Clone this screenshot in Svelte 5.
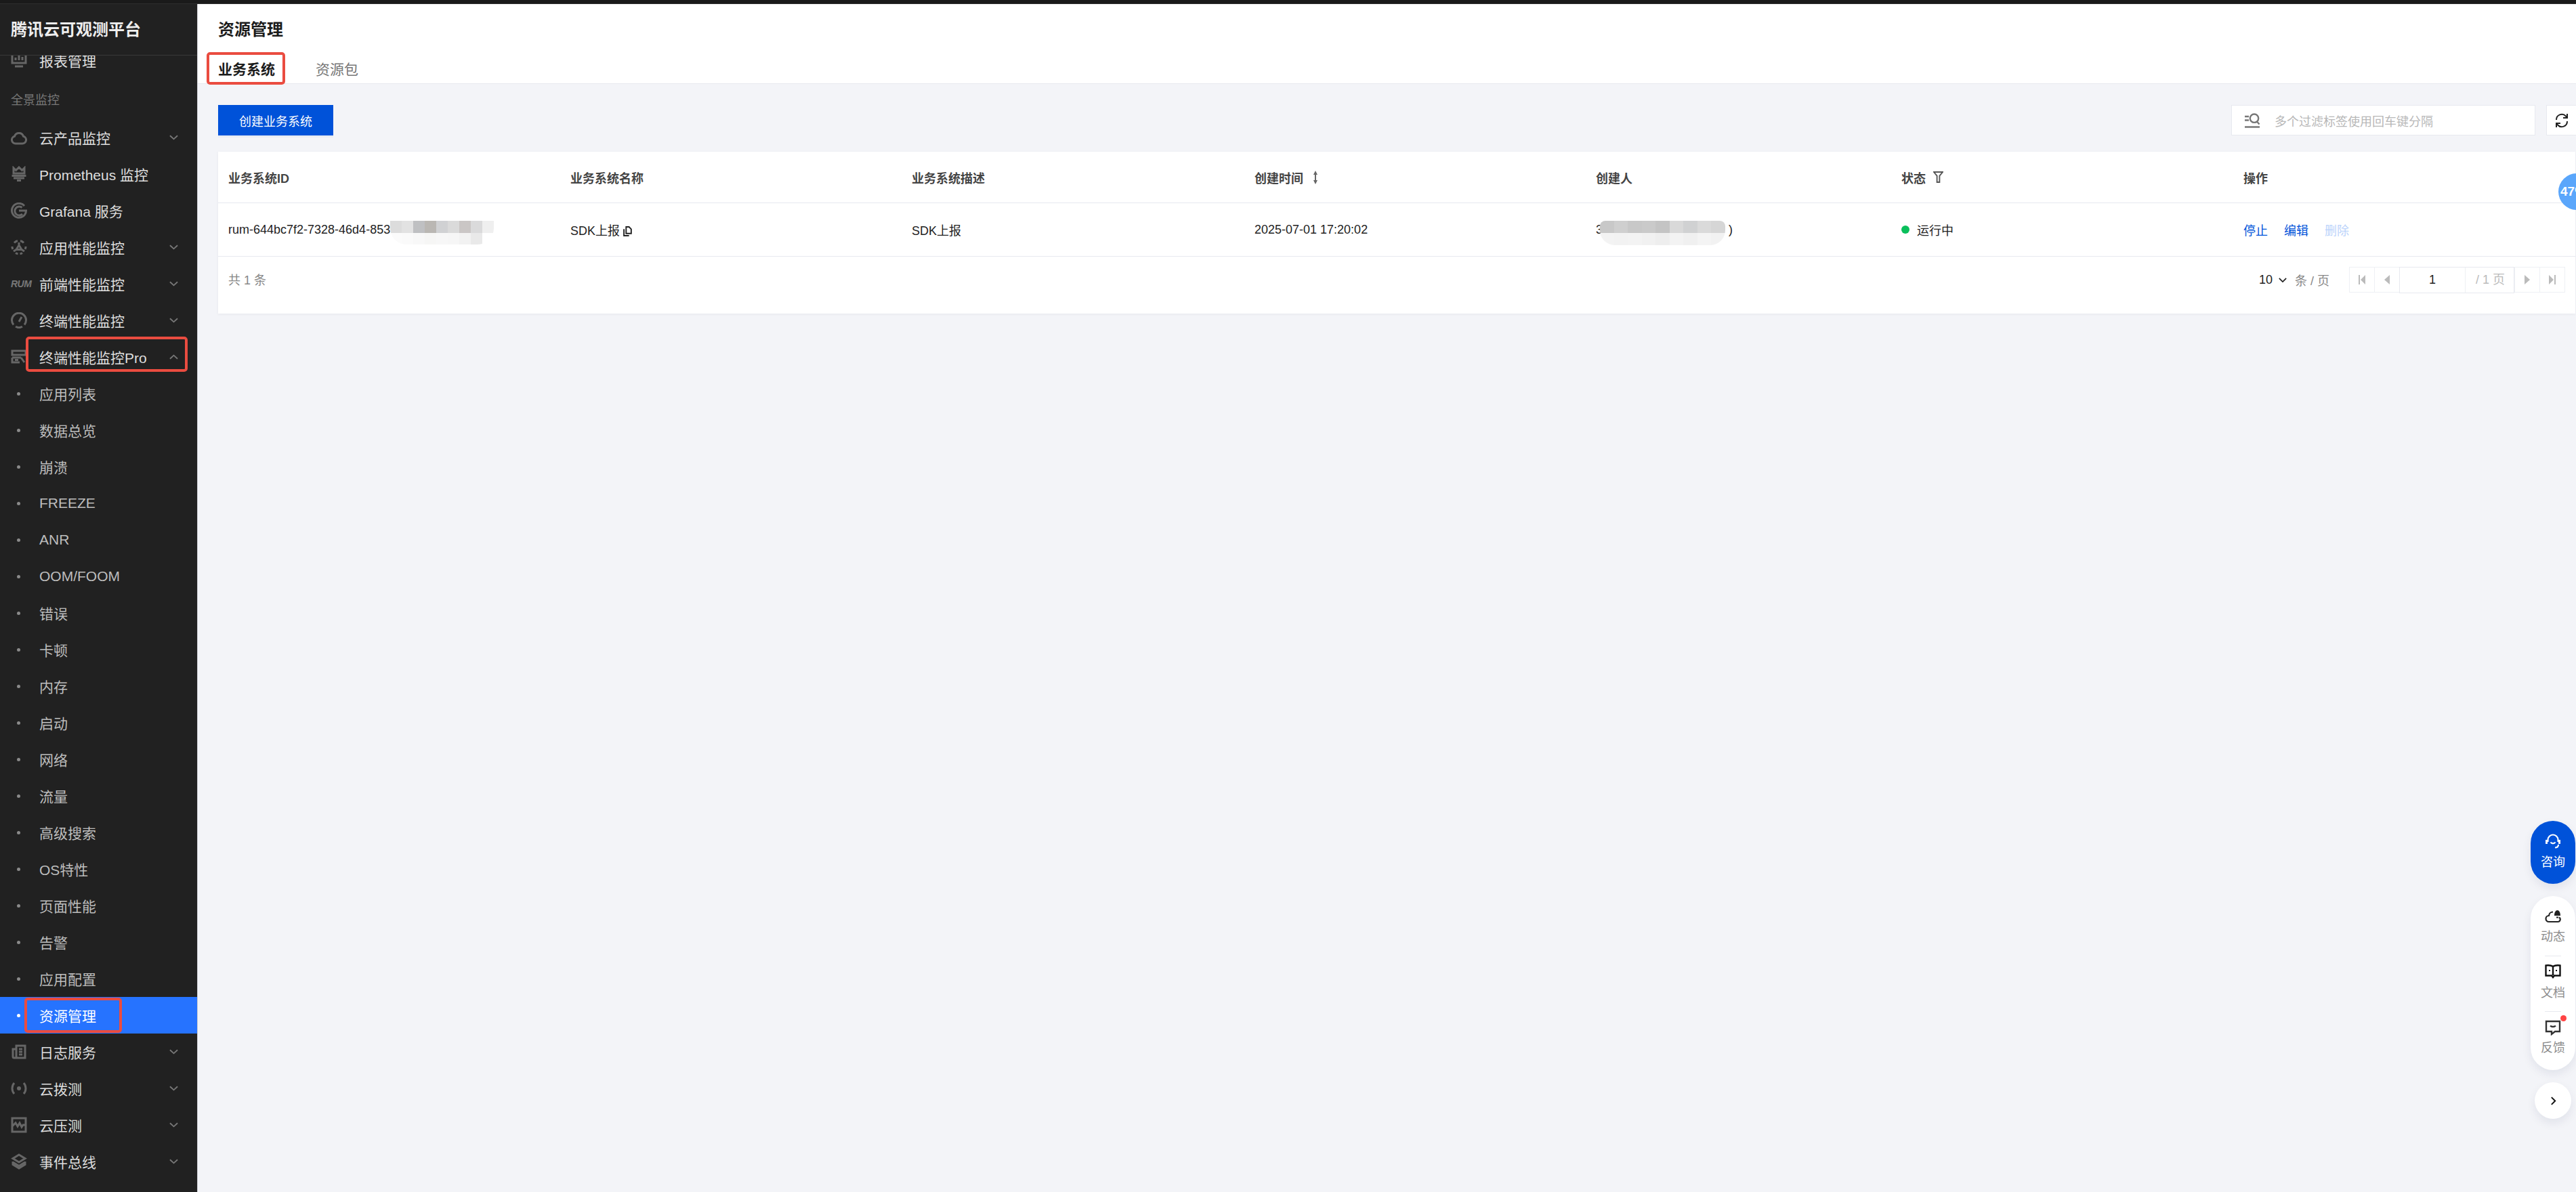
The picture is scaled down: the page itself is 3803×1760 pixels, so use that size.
<script>
	const icons = {
		report: 'M2 1v15h20V1M6 21h12M7 12V8M12 12V5M17 12V7',
		cloud: 'M7 21a5.500 5.500 0 0 1-1.500-10.800A6.800 6.800 0 0 1 18.500 10.200 5.500 5.500 0 0 1 17 21z',
		crown: 'M4 3l3.500 3.500L12 2l4.500 4.500L20 3v8H4zM1.500 14.500h21M4 18h16M9 21.500h6',
		grafana: 'M20 5A10.500 10.500 0 1 0 22.500 12H12M17 17A6.500 6.500 0 1 1 16.500 7.500',
		apm: 'M12 9l4 6.500H8zM12 9V5M16 15.500l4 2.500M8 15.500l-4 2.500M5 5.500a10 10 0 0 1 5-3M14 2.500a10 10 0 0 1 5 3M22 11a10 10 0 0 1-.8 4M17 20.500a10 10 0 0 1-3.500 1.300M10.500 21.800A10 10 0 0 1 7 20.500M2.800 15A10 10 0 0 1 2 11',
		gauge: 'M4 18.500A10.500 10.500 0 1 1 20 18.500M7 21.300a10.500 10.500 0 0 0 10 0M12 14l4-7',
		pro: 'M2 3h20v6H2zM2 13h13M2 13v7h11M6 16.500h5M15 13l5 7',
		log: 'M8 3h13v18H5a2 2 0 0 1-2-2V8h5zM8 8v13M12 8h5M12 12h5M12 16h5',
		dial: 'M5 4c-4 4.500-4 11.500 0 16M19 4c4 4.500 4 11.500 0 16M10.500 12a1.500 1.500 0 1 0 3 0a1.500 1.500 0 1 0-3 0',
		pulse: 'M2 2h20v20H2zM2 14l5-5 3 5 3-5 3 6 2-3h4',
		layers: 'M12 2l9 5.500-9 5.500-9-5.500zM3 13l9 5.500 9-5.500M3 12v4.500l9 5.500 9-5.500V12'
	};

	const groupsAbove = [
		{ label: '云产品监控', icon: 'cloud', arrow: true },
		{ label: 'Prometheus 监控', icon: 'crown' },
		{ label: 'Grafana 服务', icon: 'grafana' },
		{ label: '应用性能监控', icon: 'apm', arrow: true },
		{ label: '前端性能监控', rum: true, arrow: true },
		{ label: '终端性能监控', icon: 'gauge', arrow: true }
	];

	const subItems = [
		'应用列表', '数据总览', '崩溃', 'FREEZE', 'ANR', 'OOM/FOOM', '错误', '卡顿', '内存',
		'启动', '网络', '流量', '高级搜索', 'OS特性', '页面性能', '告警', '应用配置'
	];

	const groupsBelow = [
		{ label: '日志服务', icon: 'log' },
		{ label: '云拨测', icon: 'dial' },
		{ label: '云压测', icon: 'pulse' },
		{ label: '事件总线', icon: 'layers' }
	];

	const idBlurTop = ['#dcdcdc', '#e2e2e2', '#bfc0c2', '#bab7b3', '#d0d1d3', '#dadada', '#cac6c5', '#dadadb', '#efefef'];
	const idBlurBottom = ['#fbfbfb', '#fafafa', '#f8f8f8', '#f6f6f5', '#f7f7f7', '#f6f6f6', '#f2f2f2', '#e9e9e9', '#ffffff'];
	const ownerBlurTop = ['#c8c8c8', '#cfcfcf', '#c8c8c8', '#cacaca', '#c4c4c4', '#d9d9d9', '#d0d1d2', '#dadada', '#d6d6d6'];
	const ownerBlurBottom = ['#f3f3f3', '#f2f2f2', '#f3f3f3', '#f1f1f1', '#eeeeee', '#f3f3f3', '#f0f0f0', '#f4f4f4', '#f2f2f2'];
</script>

{#snippet navIcon(name)}
	<svg class="nav-icon" viewBox="0 0 24 24" fill="none" stroke="currentColor" stroke-width="3">
		<path d={icons[name]} />
	</svg>
{/snippet}

{#snippet chevron(up)}
	<svg class="chevron" class:up viewBox="0 0 14 8" fill="none" stroke="currentColor" stroke-width="2">
		<path d="M1 1l6 5.500L13 1" />
	</svg>
{/snippet}

{#snippet blur(top, bottom)}
	<span class="blur">
		{#each top as c}<i style="background:{c}"></i>{/each}
		{#each bottom as c}<i style="background:{c}"></i>{/each}
	</span>
{/snippet}

<div class="page">
	<div class="topbar"></div>
	<div class="shell">
		<aside class="sidebar">
			<div class="brand">腾讯云可观测平台</div>
			<nav class="nav">
				<div class="nav-scroll">
					<div class="item">{@render navIcon('report')}<span>报表管理</span></div>
					<div class="section">全景监控</div>
					{#each groupsAbove as g}
						<div class="item">
							{#if g.rum}<b class="rum">RUM</b>{:else}{@render navIcon(g.icon)}{/if}
							<span>{g.label}</span>
							{#if g.arrow}{@render chevron(false)}{/if}
						</div>
					{/each}
					<div class="item marked-pro">
						{@render navIcon('pro')}
						<span>终端性能监控Pro</span>
						{@render chevron(true)}
					</div>
					{#each subItems as s}
						<div class="item sub"><em></em><span>{s}</span></div>
					{/each}
					<div class="item sub active"><em></em><span>资源管理</span></div>
					{#each groupsBelow as g}
						<div class="item">
							{@render navIcon(g.icon)}
							<span>{g.label}</span>
							{@render chevron(false)}
						</div>
					{/each}
				</div>
			</nav>
		</aside>

		<main class="main">
			<header class="head">
				<h1>资源管理</h1>
				<div class="tabs">
					<div class="tab current">业务系统</div>
					<div class="tab">资源包</div>
				</div>
			</header>

			<section class="content">
				<div class="toolbar">
					<button type="button" class="primary">创建业务系统</button>
					<div class="tools">
						<div class="search">
							<svg viewBox="0 0 24 24" fill="none" stroke="#777" stroke-width="2.400">
								<path d="M1 6h6M1 11.500h6M1 21.500h22M15 2.500a6.200 6.200 0 1 0 0 12.400a6.200 6.200 0 1 0 0-12.400M19 13.500l3.500 4" />
							</svg>
							<span>多个过滤标签使用回车键分隔</span>
						</div>
						<button type="button" class="refresh" aria-label="刷新">
							<svg viewBox="0 0 24 24" fill="none" stroke="#222" stroke-width="2">
								<path d="M4 11a8 8 0 0 1 14-5.500l1.500 1.500M20 13a8 8 0 0 1-14 5.500L4.500 17M20 2v6h-6M4 22v-6h6" />
							</svg>
						</button>
					</div>
				</div>

				<div class="card">
					<div class="row th">
						<div>业务系统ID</div>
						<div>业务系统名称</div>
						<div>业务系统描述</div>
						<div class="with-icon">
							创建时间
							<svg class="sort" viewBox="0 0 8 20" fill="#666"><path d="M4 0l3 6H5v8h2l-3 6-3-6h2V6H1z" /></svg>
						</div>
						<div>创建人</div>
						<div class="with-icon">
							状态
							<svg class="filter" viewBox="0 0 16 18" fill="none" stroke="#555" stroke-width="2"><path d="M1 1h14l-5 6v10H6V7z" /></svg>
						</div>
						<div>操作</div>
					</div>
					<div class="row td">
						<div class="inline"><span>rum-644bc7f2-7328-46d4-853</span>{@render blur(idBlurTop, idBlurBottom)}</div>
						<div class="with-icon">
							SDK上报
							<svg class="copy" viewBox="0 0 12 14" fill="none" stroke="#222" stroke-width="1.800"><path d="M4 1h4l3 3v6H4zM1 4v9h7" /></svg>
						</div>
						<div>SDK上报</div>
						<div>2025-07-01 17:20:02</div>
						<div class="inline owner"><span>3</span>{@render blur(ownerBlurTop, ownerBlurBottom)}<span>)</span></div>
						<div class="with-icon status"><i class="dot"></i>运行中</div>
						<div class="ops"><a href="#stop">停止</a><a href="#edit">编辑</a><a href="#del" class="off">删除</a></div>
					</div>
					<div class="foot">
						<span class="total">共 1 条</span>
						<div class="pager">
							<span class="size">10</span>
							<svg class="size-arrow" viewBox="0 0 14 8" fill="none" stroke="#222" stroke-width="2"><path d="M1 1l6 6 6-6" /></svg>
							<span class="unit">条 / 页</span>
							<div class="pages">
								<span class="cell"><svg viewBox="0 0 10 14" fill="#bbb"><path d="M0 0h2v14H0zM10 0v14L3 7z" /></svg></span>
								<span class="cell"><svg viewBox="0 0 10 14" fill="#bbb"><path d="M9 0v14L1 7z" /></svg></span>
								<span class="page-input"><b>1</b><i>/ 1 页</i></span>
								<span class="cell"><svg viewBox="0 0 10 14" fill="#bbb"><path d="M1 0v14l8-7z" /></svg></span>
								<span class="cell last"><svg viewBox="0 0 10 14" fill="#bbb"><path d="M0 0v14l7-7zM8 0h2v14H8z" /></svg></span>
							</div>
						</div>
					</div>
				</div>
			</section>
		</main>
	</div>

	<div class="bubble">47%</div>

	<div class="dock">
		<div class="consult">
			<svg viewBox="0 0 24 24" fill="none" stroke="#fff" stroke-width="2.200">
				<path d="M4.500 13V10a7.500 7.500 0 0 1 15 0v3M8.500 13.500c1.500 2.500 5.500 2.500 7 0M20 17c0 3-2 4.500-5 4.500" />
				<path d="M1 10h3v6H1zM20 10h3v6h-3z" fill="#fff" stroke="none" />
			</svg>
			<span>咨询</span>
		</div>
		<div class="links">
			<div class="link news">
				<svg viewBox="0 0 24 24" fill="none" stroke="#222" stroke-width="2.200">
					<path d="M12 5.500A6 6 0 0 0 6 11a4.500 4.500 0 0 0 0 9h13a3.500 3.500 0 0 0 2-6.500" />
					<path d="M14 11c0-5 2-8 4.500-8s4.500 3 4.500 8zM17 12.500h3v2h-3z" fill="#222" stroke="none" />
				</svg>
				<span>动态</span>
			</div>
			<div class="link doc">
				<svg viewBox="0 0 24 24" fill="none" stroke="#111" stroke-width="2.400">
					<path d="M12 5C9 3 5 3 1.500 3.500v15h8.500l2 2.500 2-2.500h8.500v-15C19 3 15 3 12 5zM12 5v13" />
					<path d="M6 10h2v2H6zM16 10h2v2h-2z" fill="#111" stroke="none" />
				</svg>
				<span>文档</span>
			</div>
			<div class="link feedback">
				<i class="badge"></i>
				<svg viewBox="0 0 24 24" fill="none" stroke="#333" stroke-width="2.400">
					<path d="M2 3h20v15h-7l-5 4v-4H2zM8 9.500c2 2 6 2 8 0" />
				</svg>
				<span>反馈</span>
			</div>
		</div>
		<button type="button" class="collapse" aria-label="收起">
			<svg viewBox="0 0 10 14" fill="none" stroke="#111" stroke-width="2.200"><path d="M2 1l6 6-6 6" /></svg>
		</button>
	</div>
</div>

<style>
	:global(body) {
		margin: 0;
		background: #f3f4f8;
	}

	.page {
		width: 3803px;
		height: 1760px;
		position: relative;
		overflow: hidden;
		display: flex;
		flex-direction: column;
		font-family: 'Liberation Sans', 'Noto Sans CJK SC', sans-serif;
		font-size: 18px;
		color: #222;
	}

	.topbar {
		height: 5px;
		flex: none;
		background: #1a1a1a;
		border-bottom: 1px solid #2e2e2e;
	}

	.shell {
		flex: 1;
		min-height: 0;
		display: flex;
	}

	.sidebar {
		width: 291px;
		flex: none;
		display: flex;
		flex-direction: column;
		background: #212121;
		border-right: 1px solid #c9cad0;
		overflow: hidden;
	}

	.brand {
		height: 76px;
		flex: none;
		box-sizing: border-box;
		padding: 22px 0 0 16px;
		line-height: 32px;
		font-size: 24px;
		font-weight: 700;
		color: #eee;
		border-bottom: 1px solid #383838;
		background: #212121;
		position: relative;
		z-index: 1;
	}

	.nav {
		flex: 1;
		min-height: 0;
	}

	.nav-scroll {
		margin-top: -20px;
	}

	.item {
		height: 54px;
		display: flex;
		align-items: center;
		padding-left: 16px;
		color: #dedede;
		font-size: 21px;
		position: relative;
	}

	.item > span {
		margin-left: 18px;
		white-space: nowrap;
	}

	.nav-icon {
		width: 24px;
		height: 24px;
		flex: none;
		color: #666;
	}

	.rum {
		width: 24px;
		font-size: 14px;
		font-style: italic;
		font-weight: 700;
		color: #777;
		letter-spacing: -0.5px;
	}

	.chevron {
		position: absolute;
		left: 250px;
		top: 23px;
		width: 13px;
		height: 8px;
		color: #777;
	}

	.chevron.up {
		transform: rotate(180deg);
	}

	.section {
		height: 60px;
		box-sizing: border-box;
		padding: 19px 0 0 16px;
		line-height: 26px;
		font-size: 18px;
		color: #777;
	}

	.sub {
		color: #bdbdbd;
		padding-left: 25px;
	}

	.sub em {
		width: 5px;
		height: 5px;
		flex: none;
		border-radius: 50%;
		background: #8a8a8a;
	}

	.sub > span {
		margin-left: 28px;
	}

	.active {
		background: #2673ff;
		color: #fff;
	}

	.active em {
		background: #fff;
	}

	.marked-pro::after,
	.active::after,
	.tab.current::after {
		content: '';
		position: absolute;
		box-sizing: border-box;
		border: 4px solid #ea4c40;
		border-radius: 5px;
		pointer-events: none;
	}

	.marked-pro::after {
		left: 38px;
		top: -3px;
		width: 239px;
		height: 52px;
	}

	.active::after {
		left: 36px;
		top: 1px;
		width: 144px;
		height: 52px;
	}

	.main {
		flex: 1;
		min-width: 0;
		display: flex;
		flex-direction: column;
	}

	.head {
		flex: none;
		height: 118px;
		box-sizing: border-box;
		padding: 20px 0 0 30px;
		background: #fff;
		border-bottom: 1px solid #e7e9ef;
	}

	h1 {
		margin: 0;
		font-size: 24px;
		line-height: 36px;
		font-weight: 700;
		color: #1c1c1c;
	}

	.tabs {
		display: flex;
		gap: 60px;
		margin-top: 20px;
	}

	.tab {
		height: 42px;
		line-height: 42px;
		font-size: 21px;
		color: #777;
		position: relative;
	}

	.tab.current {
		color: #1c1c1c;
		font-weight: 700;
		box-shadow: inset 0 -3px 0 #0052d9;
	}

	.tab.current::after {
		left: -17px;
		top: -5px;
		width: 116px;
		height: 48px;
	}

	.content {
		padding: 31px 1px 0 30px;
	}

	.toolbar {
		height: 45px;
		display: flex;
		justify-content: space-between;
	}

	.primary {
		width: 170px;
		height: 45px;
		border: 0;
		padding: 0;
		background: #0052d9;
		color: #fff;
		font: inherit;
		box-shadow: 0 3px 0 #e8ebf3;
	}

	.tools {
		display: flex;
		gap: 16px;
		margin-right: -3px;
	}

	.search {
		width: 449px;
		box-sizing: border-box;
		display: flex;
		align-items: center;
		padding-left: 18px;
		gap: 21px;
		background: #fff;
		border: 1px solid #e7e9ef;
		color: #b8b8b8;
	}

	.search svg {
		width: 24px;
		height: 24px;
	}

	.refresh {
		width: 46px;
		height: 45px;
		padding: 0;
		background: #fff;
		border: 1px solid #e7e9ef;
	}

	.refresh svg {
		width: 24px;
		height: 24px;
		display: block;
		margin-left: 10px;
	}

	.card {
		margin-top: 24px;
		background: #fff;
		box-shadow: 0 1px 4px rgba(0, 20, 60, 0.06);
	}

	.row {
		display: grid;
		grid-template-columns: 505px 504px 506px 504px 451px 505px 1fr;
		padding-left: 15px;
		align-items: center;
		border-bottom: 1px solid #e7e9ef;
	}

	.th {
		height: 75px;
		font-weight: 700;
		color: #444;
	}

	.td {
		height: 78px;
		color: #222;
	}

	.with-icon {
		display: flex;
		align-items: center;
		white-space: nowrap;
	}

	.sort {
		width: 8px;
		height: 20px;
		margin-left: 14px;
	}

	.filter {
		width: 15px;
		height: 17px;
		margin-left: 11px;
	}

	.copy {
		width: 13px;
		height: 15px;
		margin-left: 5px;
		margin-top: 4px;
	}

	.inline {
		display: flex;
		align-items: center;
		white-space: nowrap;
	}

	.blur {
		width: 153px;
		height: 35px;
		margin-top: 9px;
		flex: none;
		display: grid;
		grid-template-columns: repeat(9, 1fr);
		grid-template-rows: 18px 17px;
		border-radius: 0 0 24px 24px;
		overflow: hidden;
	}

	.blur i {
		display: block;
	}

	.owner .blur {
		width: 185px;
		height: 36px;
		margin-left: -4px;
		grid-template-rows: 18px 18px;
		border-radius: 8px 8px 22px 22px;
		position: relative;
	}

	.owner span:last-child {
		margin-left: 5px;
	}

	.status {
		gap: 11px;
	}

	.dot {
		width: 12px;
		height: 12px;
		border-radius: 50%;
		background: #0abf5b;
	}

	.ops {
		display: flex;
		gap: 24px;
	}

	.ops a {
		color: #0052d9;
		text-decoration: none;
	}

	.ops a.off {
		color: #bbd3fb;
	}

	.foot {
		height: 84px;
		box-sizing: border-box;
		padding: 15px 15px 0 15px;
		display: flex;
		justify-content: space-between;
	}

	.total {
		color: #888;
		line-height: 41px;
	}

	.pager {
		display: flex;
		align-items: center;
		height: 38px;
	}

	.size {
		color: #222;
	}

	.size-arrow {
		width: 12px;
		height: 7px;
		margin-left: 9px;
	}

	.unit {
		margin-left: 12px;
		color: #888;
	}

	.pages {
		display: flex;
		margin-left: 29px;
	}

	.cell {
		width: 37px;
		height: 38px;
		box-sizing: border-box;
		display: flex;
		align-items: center;
		justify-content: center;
		border: 1px solid #eef0f4;
		border-right: 0;
	}

	.cell.last {
		border-right: 1px solid #eef0f4;
		width: 38px;
	}

	.cell svg {
		width: 10px;
		height: 14px;
	}

	.page-input {
		width: 170px;
		height: 39px;
		box-sizing: border-box;
		display: flex;
		border: 1px solid #e7e9ef;
		border-right-width: 1px;
		font-size: 18px;
		line-height: 37px;
	}

	.page-input b {
		width: 96px;
		text-align: center;
		font-weight: 400;
		border-right: 1px solid #eef0f4;
	}

	.page-input i {
		font-style: normal;
		color: #bbb;
		margin-left: 15px;
	}

	.bubble {
		position: absolute;
		left: 3777px;
		top: 256px;
		width: 54px;
		height: 54px;
		box-sizing: border-box;
		padding-left: 3px;
		border-radius: 50%;
		background: #5aa6fb;
		color: #fff;
		font-weight: 700;
		font-size: 19px;
		line-height: 54px;
	}

	.dock {
		position: absolute;
		right: 1px;
		top: 1212px;
		width: 66px;
		display: flex;
		flex-direction: column;
		align-items: center;
		gap: 18px;
	}

	.consult {
		width: 66px;
		height: 93px;
		box-sizing: border-box;
		padding-top: 18px;
		border-radius: 33px;
		background: #0052d9;
		color: #fff;
		display: flex;
		flex-direction: column;
		align-items: center;
		gap: 7px;
		box-shadow: 0 6px 14px rgba(0, 30, 80, 0.08);
		line-height: 24px;
	}

	.consult svg,
	.link svg {
		width: 24px;
		height: 24px;
		flex: none;
	}

	.links {
		width: 66px;
		background: #fff;
		border-radius: 33px;
		box-shadow: 0 6px 14px rgba(0, 30, 80, 0.08);
		display: flex;
		flex-direction: column;
		align-items: center;
	}

	.link {
		width: 100%;
		box-sizing: border-box;
		display: flex;
		flex-direction: column;
		align-items: center;
		gap: 6px;
		color: #8c8c8c;
		line-height: 24px;
		position: relative;
	}

	.link + .link::before {
		content: '';
		position: absolute;
		left: 21px;
		top: 0;
		width: 24px;
		height: 1px;
		background: #e7e9ef;
	}

	.news {
		height: 88px;
		padding-top: 18px;
	}

	.doc {
		height: 82px;
		padding-top: 11px;
		gap: 8px;
	}

	.feedback {
		height: 87px;
		padding-top: 12px;
	}

	.badge {
		position: absolute;
		left: 44px;
		top: 6px;
		width: 9px;
		height: 9px;
		border-radius: 50%;
		background: #f44;
	}

	.collapse {
		width: 54px;
		height: 54px;
		padding: 0;
		border: 0;
		border-radius: 50%;
		background: #fff;
		box-shadow: 0 6px 14px rgba(0, 30, 80, 0.08);
		display: flex;
		align-items: center;
		justify-content: center;
	}

	.collapse svg {
		width: 9px;
		height: 13px;
	}
</style>
